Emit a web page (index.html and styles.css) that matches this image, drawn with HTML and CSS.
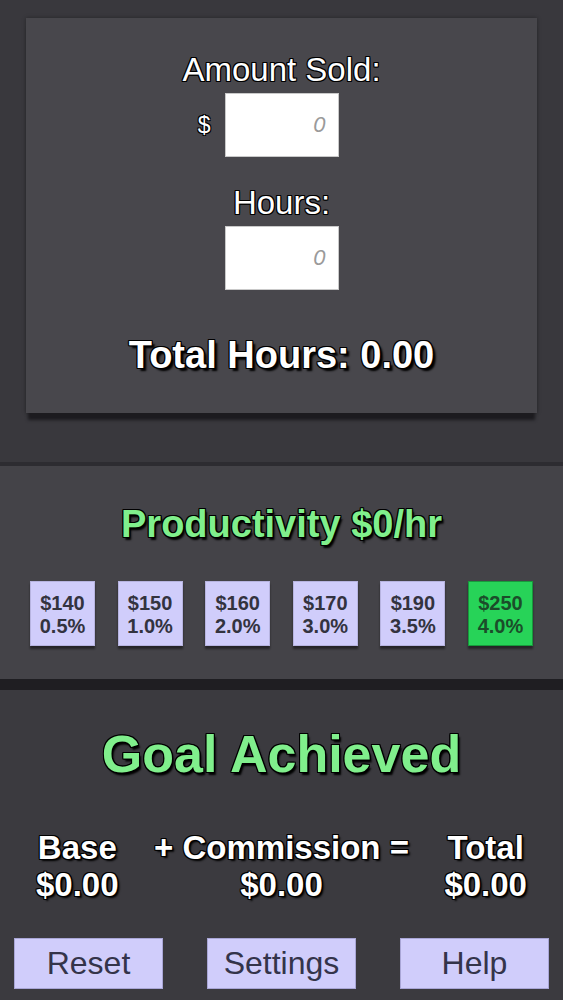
FILE: index.html
```html
<!DOCTYPE html>
<html>
<head>
<meta charset="utf-8">
<link rel="stylesheet" href="styles.css">
</head>
<body>
<div class="top">
  <div class="card">
    <div class="label">Amount Sold:</div>
    <div class="input-row">
      <span class="currency">$</span>
      <input class="num" type="text" placeholder="0">
      <span></span>
    </div>
    <div class="label label-hours">Hours:</div>
    <div class="input-row">
      <span></span>
      <input class="num" type="text" placeholder="0">
      <span></span>
    </div>
    <div class="total-hours">Total Hours: 0.00</div>
  </div>
</div>
<div class="prod">
  <div class="prod-title">Productivity $0/hr</div>
  <div class="tiles">
    <div class="tile">$140<br>0.5%</div>
    <div class="tile">$150<br>1.0%</div>
    <div class="tile">$160<br>2.0%</div>
    <div class="tile">$170<br>3.0%</div>
    <div class="tile">$190<br>3.5%</div>
    <div class="tile tile-active">$250<br>4.0%</div>
  </div>
</div>
<div class="bottom">
  <div class="goal">Goal Achieved</div>
  <div class="sums">
    <div class="col"><div>Base</div><div>$0.00</div></div>
    <div class="col"><div>+ Commission =</div><div>$0.00</div></div>
    <div class="col"><div>Total</div><div>$0.00</div></div>
  </div>
  <div class="buttons">
    <button class="btn">Reset</button>
    <button class="btn">Settings</button>
    <button class="btn">Help</button>
  </div>
</div>
</body>
</html>
```
FILE: styles.css
```css
html, body {
  margin: 0;
  padding: 0;
}
body {
  width: 563px;
  height: 1000px;
  overflow: hidden;
  background: #3b3a3f;
  font-family: "Liberation Sans", Arial, sans-serif;
  color: #fff;
}
.top {
  height: 444px;
  padding-top: 18px;
  background: #39383d;
  border-bottom: 4px solid #2d2c31;
}
.card {
  margin: 0 26px;
  height: 362px;
  padding-top: 33px;
  background: #48474c;
  box-shadow: 0 9px 3px -2px #1c1b1f, 0 0 4px rgba(0,0,0,0.35);
  text-align: center;
}
.label {
  font-size: 33px;
  line-height: 38px;
  text-shadow: -1px -1px 0 #000, 1px -1px 0 #000, -1px 1px 0 #000, 1px 1px 0 #000,
    0 -1px 0 #000, 0 1px 0 #000, -1px 0 0 #000, 1px 0 0 #000;
}
.label-hours {
  margin-top: 27px;
}
.input-row {
  display: grid;
  grid-template-columns: 1fr 114px 1fr;
  align-items: center;
  margin-top: 4px;
}
.currency {
  justify-self: end;
  margin-right: 14px;
  font-size: 23px;
  text-shadow: -1px -1px 0 #000, 1px -1px 0 #000, -1px 1px 0 #000, 1px 1px 0 #000;
}
.num {
  box-sizing: border-box;
  width: 114px;
  height: 64px;
  margin: 0;
  padding: 0 12px 0 0;
  border: 1px solid #c9c9c9;
  background: #fff;
  text-align: right;
  font-family: "Liberation Sans", Arial, sans-serif;
  font-size: 22px;
  outline: none;
}
.num::placeholder {
  color: #9a9a9a;
  font-style: italic;
}
.total-hours {
  margin-top: 44px;
  font-size: 38px;
  line-height: 42px;
  font-weight: bold;
  text-shadow: -1px -1px 0 #000, 1px -1px 0 #000, -1px 1px 0 #000, 1px 1px 0 #000,
    0 -1px 0 #000, 0 1px 0 #000, -1px 0 0 #000, 1px 0 0 #000, 3px 3px 2px #000;
}
.prod {
  height: 176px;
  padding-top: 37px;
  background: #444348;
  border-bottom: 11px solid #1f1e22;
  text-align: center;
}
.prod-title, .goal {
  font-weight: bold;
  color: #80ef8c;
  text-shadow: -1px -1px 0 #000, 1px -1px 0 #000, -1px 1px 0 #000, 1px 1px 0 #000,
    0 -1px 0 #000, 0 1px 0 #000, -1px 0 0 #000, 1px 0 0 #000, 2px 3px 2px #000;
}
.prod-title {
  font-size: 38px;
  line-height: 42px;
}
.tiles {
  display: flex;
  justify-content: space-between;
  padding: 0 30px;
  margin-top: 36px;
}
.tile {
  box-sizing: border-box;
  width: 65px;
  height: 65px;
  padding-top: 10px;
  background: #d0cdfb;
  border: 1px solid #b7b4e0;
  box-shadow: 0 3px 2px rgba(0,0,0,0.45);
  color: #33333f;
  font-weight: bold;
  font-size: 20px;
  line-height: 23px;
  text-align: center;
}
.tile-active {
  background: #27d358;
  border-color: #179a3c;
  color: #1b4d2a;
}
.bottom {
  padding-top: 34px;
  text-align: center;
}
.goal {
  font-size: 52px;
  line-height: 60px;
}
.sums {
  display: flex;
  justify-content: space-between;
  padding: 0 36px;
  margin-top: 45px;
  font-size: 33px;
  line-height: 37px;
  font-weight: bold;
  text-shadow: -1px -1px 0 #000, 1px -1px 0 #000, -1px 1px 0 #000, 1px 1px 0 #000,
    0 -1px 0 #000, 0 1px 0 #000, -1px 0 0 #000, 1px 0 0 #000, 2px 2px 2px #000;
}
.col {
  text-align: center;
  white-space: nowrap;
}
.buttons {
  display: flex;
  justify-content: space-between;
  padding: 0 14px;
  margin-top: 35px;
}
.btn {
  width: 149px;
  height: 51px;
  margin: 0;
  padding: 0;
  background: #d0cdfb;
  border: 1px solid #a9a6d6;
  border-radius: 0;
  color: #34344a;
  font-family: "Liberation Sans", Arial, sans-serif;
  font-size: 32px;
}
```
